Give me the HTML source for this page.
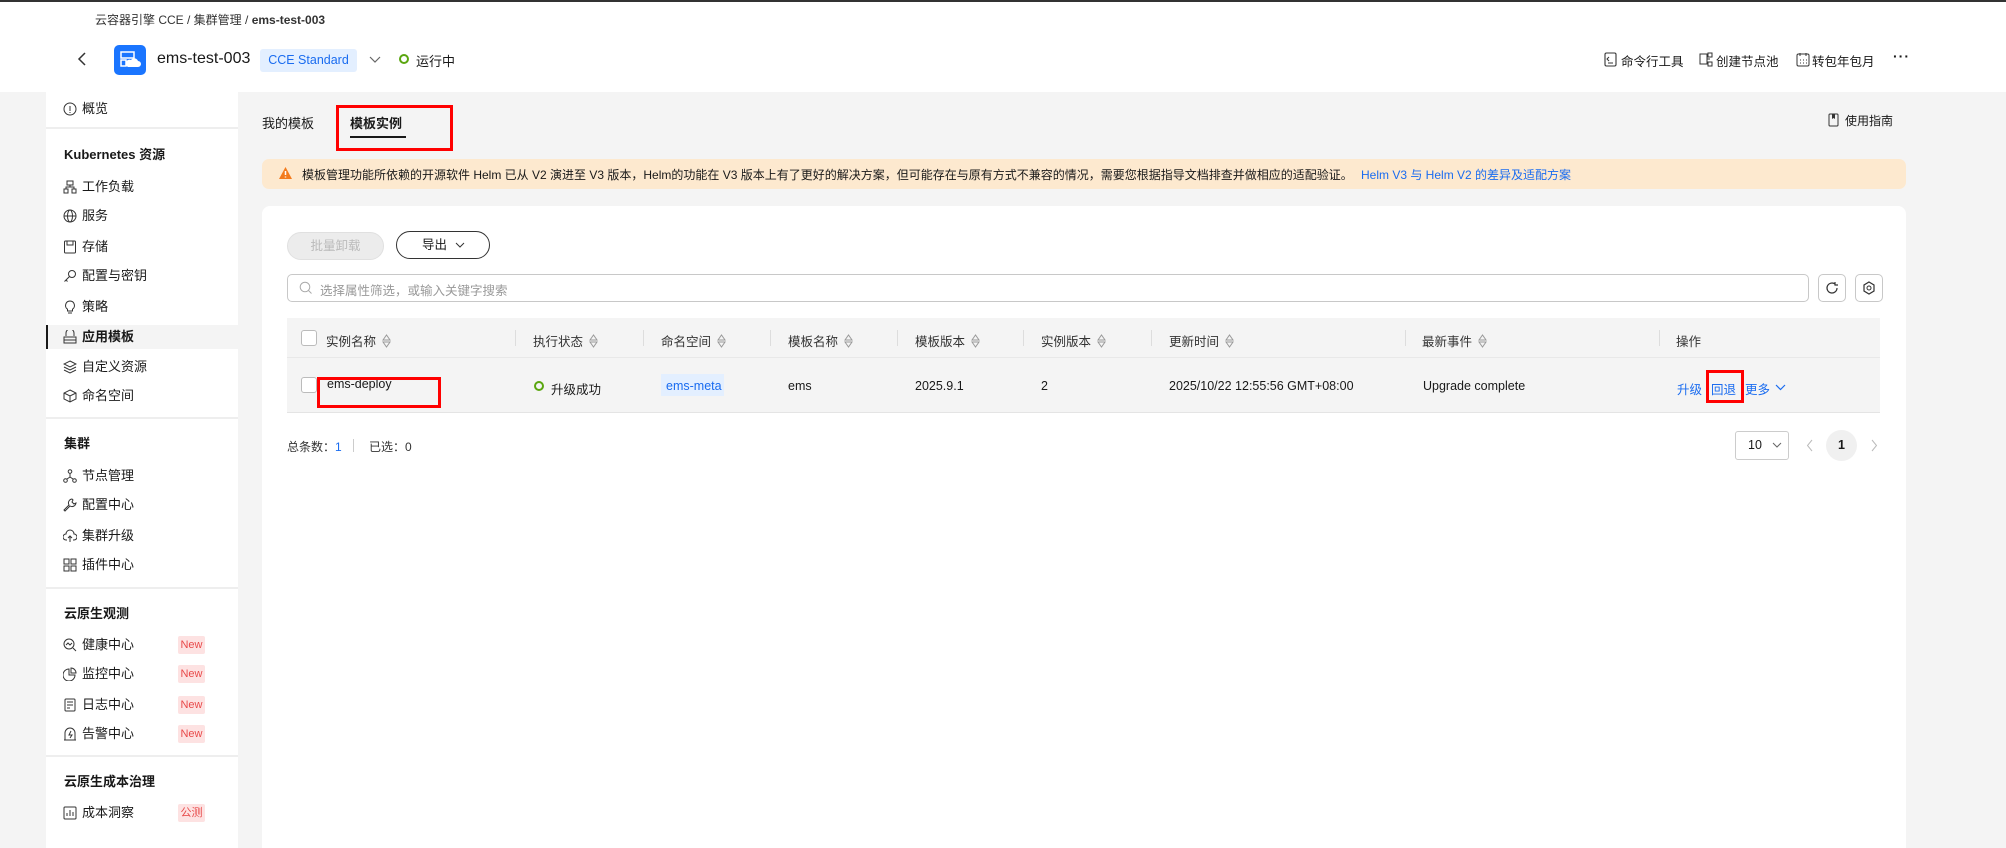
<!DOCTYPE html>
<html><head><meta charset="utf-8"><style>
*{box-sizing:border-box;margin:0;padding:0}
html,body{width:2006px;height:848px;overflow:hidden}
body{background:#f4f4f4;font-family:"Liberation Sans","Noto Sans CJK SC",sans-serif;font-size:13px;color:#191919;position:relative}
.a{position:absolute;white-space:nowrap}
.side .t{position:absolute;left:82px;font-size:13px;line-height:16px}
.side .h{position:absolute;left:64px;font-weight:bold;font-size:13px}
.side svg{position:absolute;left:63px}
.new{position:absolute;left:178px;width:27px;height:18px;background:#fde2e2;color:#e84a4a;font-size:11px;text-align:center;line-height:18px;border-radius:2px}
.dv{position:absolute;left:46px;width:192px;height:2px;background:#eee}
.th{position:absolute;top:331px;font-size:12.5px;color:#333}
.sep{position:absolute;top:330px;width:1px;height:16px;background:#ddd}
.sort{display:inline-block;width:9px;height:14px;margin-left:6px;vertical-align:-2px}
.td{position:absolute;top:379px;font-size:12.5px}
.redbox{position:absolute;border:3px solid #f00}
</style></head><body>
<div class="a" style="left:0;top:0;width:2006px;height:2px;background:#333"></div>
<div class="a" style="left:0;top:2px;width:2006px;height:90px;background:#fff"></div>
<div class="a" style="left:95px;top:11px;font-size:12px;color:#333">云容器引擎 CCE / 集群管理 / <b>ems-test-003</b></div>
<svg class="a" style="left:76px;top:51px" width="12" height="16" viewBox="0 0 12 16"><path d="M9 2L3 8l6 6" fill="none" stroke="#333" stroke-width="1.5"/></svg>
<div class="a" style="left:114px;top:45px;width:32px;height:30px;background:#1a75ff;border-radius:5px"></div>
<svg class="a" style="left:118px;top:49px" width="24" height="22" viewBox="0 0 24 22"><rect x="3" y="3" width="13" height="6" fill="none" stroke="#fff" stroke-width="1.5"/><rect x="3" y="11" width="5" height="6" fill="none" stroke="#fff" stroke-width="1.5"/><path d="M10 18h10a3 3 0 0 0 0-6 4 4 0 0 0-7-1 3 3 0 0 0-3 7z" fill="#fff"/></svg>
<div class="a" style="left:157px;top:50px;font-size:16px;color:#191919">ems-test-003</div>
<div class="a" style="left:260px;top:49px;width:97px;height:23px;background:#e3efff;color:#1a6cf0;border-radius:3px;font-size:12.5px;line-height:23px;text-align:center">CCE Standard</div>
<svg class="a" style="left:369px;top:55px" width="12" height="10"><path d="M1 2l5 5 5-5" fill="none" stroke="#666" stroke-width="1.2"/></svg>
<div class="a" style="left:399px;top:54px;width:10px;height:10px;border:2px solid #5aa60f;border-radius:50%"></div>
<div class="a" style="left:416px;top:51px;font-size:13px">运行中</div>
<svg class="a" style="left:1604px;top:52px" width="13" height="15"><rect x="1" y="1" width="11" height="13" rx="1.5" fill="none" stroke="#333" stroke-width="1.1"/><path d="M5 5L3 7l2 2M4 11h5" fill="none" stroke="#333"/></svg>
<div class="a" style="left:1621px;top:51px;font-size:12.5px">命令行工具</div>
<svg class="a" style="left:1699px;top:52px" width="15" height="15"><rect x="1" y="2" width="7" height="10" fill="none" stroke="#333"/><rect x="9" y="1" width="4" height="4" fill="none" stroke="#333"/><rect x="9" y="10" width="4" height="4" fill="none" stroke="#333"/><path d="M8 7h3" stroke="#333"/></svg>
<div class="a" style="left:1716px;top:51px;font-size:12.5px">创建节点池</div>
<svg class="a" style="left:1796px;top:52px" width="14" height="15"><rect x="1" y="2" width="12" height="12" rx="1.5" fill="none" stroke="#333"/><path d="M4 1v3M10 1v3M4 8h1M7 8h1M10 8h1M4 11h1M7 11h1M10 11h1" stroke="#333"/></svg>
<div class="a" style="left:1812px;top:51px;font-size:12.5px">转包年包月</div>
<div class="a" style="left:1893px;top:48px;font-size:14px;font-weight:bold;letter-spacing:1px">···</div>

<div class="side">
<div class="a" style="left:46px;top:92px;width:192px;height:756px;background:#fff"></div>
<svg width="14" height="14" style="top:102px"><circle cx="7" cy="7" r="6" fill="none" stroke="#333"/><path d="M7 4v5M7 10v1" stroke="#333"/></svg><div class="t" style="top:101px">概览</div>
<div class="dv" style="top:127px"></div>
<div class="h" style="top:144px">Kubernetes 资源</div>
<svg width="14" height="14" style="top:180px"><rect x="4" y="1" width="6" height="4" fill="none" stroke="#333"/><rect x="1" y="9" width="4" height="4" fill="none" stroke="#333"/><rect x="9" y="9" width="4" height="4" fill="none" stroke="#333"/><path d="M7 5v2H3v2M7 7h4v2" fill="none" stroke="#333"/></svg><div class="t" style="top:179px">工作负载</div>
<svg width="14" height="14" style="top:209px"><circle cx="7" cy="7" r="6" fill="none" stroke="#333"/><ellipse cx="7" cy="7" rx="2.5" ry="6" fill="none" stroke="#333"/><path d="M1 7h12" stroke="#333"/></svg><div class="t" style="top:208px">服务</div>
<svg width="14" height="14" style="top:240px"><rect x="1.5" y="1" width="11" height="12" rx="1" fill="none" stroke="#333"/><path d="M4 1v4h6V1" fill="none" stroke="#333"/></svg><div class="t" style="top:239px">存储</div>
<svg width="14" height="14" style="top:269px"><circle cx="9" cy="5" r="3.5" fill="none" stroke="#333"/><path d="M6.5 7.5L1.5 12.5M3 11l1.5 1.5" fill="none" stroke="#333"/></svg><div class="t" style="top:268px">配置与密钥</div>
<svg width="14" height="14" style="top:300px"><path d="M7 1a4.5 4.5 0 0 0-2.5 8.2V11h5V9.2A4.5 4.5 0 0 0 7 1zM5 13h4" fill="none" stroke="#333"/></svg><div class="t" style="top:299px">策略</div>
<div class="a" style="left:46px;top:325px;width:192px;height:24px;background:#f4f4f4"></div>
<div class="a" style="left:46px;top:325px;width:2px;height:24px;background:#191919"></div>
<svg width="14" height="14" style="top:330px"><path d="M3 6V3a4 4 0 0 1 8 0v3M1 7h12v6H1zM1 10h12" fill="none" stroke="#333"/></svg><div class="t" style="top:329px;font-weight:bold">应用模板</div>
<svg width="14" height="14" style="top:360px"><path d="M7 1l6 3-6 3-6-3zM1 7l6 3 6-3M1 10l6 3 6-3" fill="none" stroke="#333"/></svg><div class="t" style="top:359px">自定义资源</div>
<svg width="14" height="14" style="top:389px"><path d="M7 1l6 3v6l-6 3-6-3V4zM1 4l6 3 6-3M7 7v6" fill="none" stroke="#333"/></svg><div class="t" style="top:388px">命名空间</div>
<div class="dv" style="top:417px"></div>
<div class="h" style="top:433px">集群</div>
<svg width="14" height="14" style="top:469px"><circle cx="7" cy="2.5" r="1.8" fill="none" stroke="#333"/><circle cx="2.5" cy="11.5" r="1.8" fill="none" stroke="#333"/><circle cx="11.5" cy="11.5" r="1.8" fill="none" stroke="#333"/><path d="M7 4v4L4 10M7 8l3 2" fill="none" stroke="#333"/></svg><div class="t" style="top:468px">节点管理</div>
<svg width="14" height="14" style="top:498px"><path d="M9 1a4 4 0 0 0-3 6L1 12l1 1 5-5a4 4 0 0 0 6-3l-2 1-2-2 1-2z" fill="none" stroke="#333"/></svg><div class="t" style="top:497px">配置中心</div>
<svg width="14" height="14" style="top:529px"><path d="M4 11H3a3 3 0 0 1 0-6 4 4 0 0 1 8 0 3 3 0 0 1 0 6h-1M7 13V7M5 9l2-2 2 2" fill="none" stroke="#333"/></svg><div class="t" style="top:528px">集群升级</div>
<svg width="14" height="14" style="top:558px"><rect x="1" y="1" width="5" height="5" fill="none" stroke="#333"/><rect x="8" y="1" width="5" height="5" fill="none" stroke="#333"/><rect x="1" y="8" width="5" height="5" fill="none" stroke="#333"/><rect x="8" y="8" width="5" height="5" fill="none" stroke="#333"/></svg><div class="t" style="top:557px">插件中心</div>
<div class="dv" style="top:587px"></div>
<div class="h" style="top:603px">云原生观测</div>
<svg width="14" height="14" style="top:638px"><circle cx="6" cy="6" r="5" fill="none" stroke="#333"/><path d="M10 10l3 3M3 7l2-2 2 2 2-2" fill="none" stroke="#333"/></svg><div class="t" style="top:637px">健康中心</div><div class="new" style="top:636px">New</div>
<svg width="14" height="14" style="top:667px"><path d="M6 2a6 6 0 1 0 6 6H6z" fill="none" stroke="#333"/><path d="M8 1v5h5a5 5 0 0 0-5-5z" fill="none" stroke="#333"/></svg><div class="t" style="top:666px">监控中心</div><div class="new" style="top:665px">New</div>
<svg width="14" height="14" style="top:698px"><rect x="2" y="1" width="10" height="12" rx="1" fill="none" stroke="#333"/><path d="M4 4h6M4 7h6M4 10h3" stroke="#333"/></svg><div class="t" style="top:697px">日志中心</div><div class="new" style="top:696px">New</div>
<svg width="14" height="14" style="top:727px"><path d="M2 13V6a5 5 0 0 1 10 0v7zM1 13h12M8 4L6 8h3l-2 3" fill="none" stroke="#333"/></svg><div class="t" style="top:726px">告警中心</div><div class="new" style="top:725px">New</div>
<div class="dv" style="top:755px"></div>
<div class="h" style="top:771px">云原生成本治理</div>
<svg width="14" height="14" style="top:806px"><rect x="1" y="1" width="12" height="12" rx="1" fill="none" stroke="#333"/><path d="M4 10V7M7 10V4M10 10V6" stroke="#333"/></svg><div class="t" style="top:805px">成本洞察</div><div class="new" style="top:804px">公测</div>
</div>

<div class="a" style="left:262px;top:113px;font-size:13px">我的模板</div>
<div class="a" style="left:350px;top:113px;font-size:13px;font-weight:bold">模板实例</div>
<div class="a" style="left:350px;top:136px;width:56px;height:2px;background:#191919"></div>
<div class="redbox" style="left:336px;top:105px;width:117px;height:46px"></div>
<svg class="a" style="left:1828px;top:113px" width="11" height="14"><rect x="1" y="1" width="9" height="12" rx="1" fill="none" stroke="#333"/><path d="M4 1v5l1.5-1L7 6V1" fill="#333"/></svg>
<div class="a" style="left:1845px;top:112px;font-size:12px">使用指南</div>

<div class="a" style="left:262px;top:159px;width:1644px;height:30px;background:#fde9cf;border-radius:7px"></div>
<svg class="a" style="left:278px;top:166px" width="15" height="14"><path d="M7.5 1L14 13H1z" fill="#f37b1d"/><path d="M7.5 5v4M7.5 10.5v1" stroke="#fff" stroke-width="1.5"/></svg>
<div class="a" style="left:302px;top:166px;font-size:12px">模板管理功能所依赖的开源软件 Helm 已从 V2 演进至 V3 版本，Helm的功能在 V3 版本上有了更好的解决方案，但可能存在与原有方式不兼容的情况，需要您根据指导文档排查并做相应的适配验证。</div>
<div class="a" style="left:1361px;top:166px;font-size:12px;color:#1a6cf0">Helm V3 与 Helm V2 的差异及适配方案</div>

<div class="a" style="left:262px;top:206px;width:1644px;height:642px;background:#fff;border-radius:8px 8px 0 0"></div>
<div class="a" style="left:287px;top:232px;width:97px;height:28px;background:#ececec;border:1px solid #e0e0e0;border-radius:14px;color:#bbb;font-size:12.5px;line-height:26px;text-align:center">批量卸载</div>
<div class="a" style="left:396px;top:231px;width:94px;height:28px;border:1px solid #333;border-radius:14px;font-size:12.5px;line-height:26px;padding-left:25px">导出<svg style="margin-left:8px" width="10" height="8"><path d="M1 2l4 4 4-4" fill="none" stroke="#333"/></svg></div>
<div class="a" style="left:287px;top:274px;width:1522px;height:28px;border:1px solid #c8c8c8;border-radius:5px"></div>
<svg class="a" style="left:299px;top:281px" width="13" height="14"><circle cx="6" cy="6" r="4.8" fill="none" stroke="#aaa"/><path d="M9.5 9.5l3 3" stroke="#aaa"/></svg>
<div class="a" style="left:320px;top:280px;font-size:12.5px;color:#999">选择属性筛选，或输入关键字搜索</div>
<div class="a" style="left:1818px;top:274px;width:28px;height:28px;border:1px solid #c8c8c8;border-radius:5px"></div>
<svg class="a" style="left:1825px;top:281px" width="14" height="14"><path d="M12 7a5 5 0 1 1-2-4M10 1v3h3" fill="none" stroke="#333" stroke-width="1.2"/></svg>
<div class="a" style="left:1855px;top:274px;width:28px;height:28px;border:1px solid #c8c8c8;border-radius:5px"></div>
<svg class="a" style="left:1862px;top:281px" width="14" height="14"><path d="M7 1l5 3v6l-5 3-5-3V4z" fill="none" stroke="#333" stroke-width="1.2"/><circle cx="7" cy="7" r="2" fill="none" stroke="#333"/></svg>

<div class="a" style="left:287px;top:318px;width:1593px;height:39px;background:#f4f4f4"></div>
<div class="a" style="left:287px;top:357px;width:1593px;height:56px;background:#f4f4f4;border-top:1px solid #e8e8e8;border-bottom:1px solid #e4e4e4"></div>
<div class="a" style="left:301px;top:330px;width:16px;height:16px;border:1px solid #bbb;border-radius:3px;background:#fff"></div>
<div class="a" style="left:301px;top:377px;width:16px;height:16px;border:1px solid #bbb;border-radius:3px;background:#fff"></div>
<svg width="0" height="0" style="position:absolute"><defs><symbol id="s" viewBox="0 0 9 14"><path d="M1 6l3.5-5 3.5 5zM1 8l3.5 5 3.5-5z" fill="none" stroke="#999" stroke-width="1"/></symbol></defs></svg>
<div class="th" style="left:326px">实例名称<svg class="sort"><use href="#s"/></svg></div>
<div class="sep" style="left:515px"></div>
<div class="th" style="left:533px">执行状态<svg class="sort"><use href="#s"/></svg></div>
<div class="sep" style="left:643px"></div>
<div class="th" style="left:661px">命名空间<svg class="sort"><use href="#s"/></svg></div>
<div class="sep" style="left:770px"></div>
<div class="th" style="left:788px">模板名称<svg class="sort"><use href="#s"/></svg></div>
<div class="sep" style="left:897px"></div>
<div class="th" style="left:915px">模板版本<svg class="sort"><use href="#s"/></svg></div>
<div class="sep" style="left:1023px"></div>
<div class="th" style="left:1041px">实例版本<svg class="sort"><use href="#s"/></svg></div>
<div class="sep" style="left:1151px"></div>
<div class="th" style="left:1169px">更新时间<svg class="sort"><use href="#s"/></svg></div>
<div class="sep" style="left:1405px"></div>
<div class="th" style="left:1422px">最新事件<svg class="sort"><use href="#s"/></svg></div>
<div class="sep" style="left:1659px"></div>
<div class="th" style="left:1676px">操作</div>

<div class="td" style="left:327px;top:377px">ems-deploy</div>
<div class="redbox" style="left:317px;top:377px;width:124px;height:31px"></div>
<div class="a" style="left:534px;top:381px;width:10px;height:10px;border:2px solid #5aa60f;border-radius:50%"></div>
<div class="td" style="left:551px">升级成功</div>
<div class="a" style="left:661px;top:374px;width:63px;height:22px;background:#e3efff"></div>
<div class="td" style="left:666px;color:#1a6cf0">ems-meta</div>
<div class="td" style="left:788px">ems</div>
<div class="td" style="left:915px">2025.9.1</div>
<div class="td" style="left:1041px">2</div>
<div class="td" style="left:1169px">2025/10/22 12:55:56 GMT+08:00</div>
<div class="td" style="left:1423px">Upgrade complete</div>
<div class="td" style="left:1677px;color:#1a6cf0">升级</div>
<div class="td" style="left:1711px;color:#1a6cf0">回退</div>
<div class="td" style="left:1745px;color:#1a6cf0">更多</div>
<svg class="a" style="left:1775px;top:384px" width="11" height="8"><path d="M1 1l4.5 4.5L10 1" fill="none" stroke="#1a6cf0" stroke-width="1.2"/></svg>
<div class="redbox" style="left:1706px;top:370px;width:38px;height:33px"></div>

<div class="a" style="left:287px;top:438px;font-size:12px;color:#333">总条数：<span style="color:#1a6cf0">1</span></div>
<div class="a" style="left:353px;top:439px;width:1px;height:13px;background:#ccc"></div>
<div class="a" style="left:369px;top:438px;font-size:12px;color:#333">已选：0</div>
<div class="a" style="left:1735px;top:431px;width:54px;height:29px;border:1px solid #ccc;border-radius:3px;font-size:12.5px;line-height:27px;padding-left:12px">10<svg style="margin-left:10px" width="10" height="8"><path d="M1 2l4 4 4-4" fill="none" stroke="#666"/></svg></div>
<svg class="a" style="left:1806px;top:439px" width="8" height="13"><path d="M6 1L1.5 6.5 6 12" fill="none" stroke="#bbb"/></svg>
<div class="a" style="left:1826px;top:430px;width:31px;height:31px;background:#f0f0f0;border-radius:50%;font-weight:bold;text-align:center;line-height:31px;font-size:12.5px">1</div>
<svg class="a" style="left:1870px;top:439px" width="8" height="13"><path d="M2 1l4.5 5.5L2 12" fill="none" stroke="#bbb"/></svg>
</body></html>
